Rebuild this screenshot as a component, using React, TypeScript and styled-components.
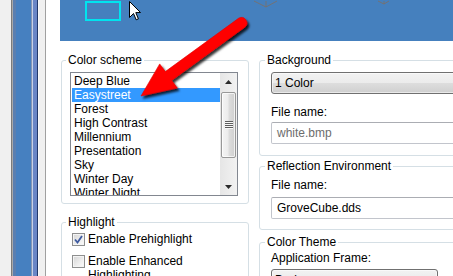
import React from "react";
import styled, { createGlobalStyle } from "styled-components";

const GlobalStyle = createGlobalStyle`
  html, body { margin: 0; padding: 0; overflow: hidden; background: #fff; }
  #root { width: 453px; height: 276px; }
`;

const Page = styled.div`
  position: relative;
  display: flex;
  width: 453px;
  height: 276px;
  overflow: hidden;
  background: #fff;
  font-family: "Liberation Sans", Arial, sans-serif;
  font-size: 12px;
  line-height: 14px;
  color: #000;
`;

const Strip = styled.div`
  display: flex;
  flex: none;
  height: 100%;
`;

const Stripe = styled.div<{ $w: number; $bg: string }>`
  flex: none;
  width: ${(p) => p.$w}px;
  background: ${(p) => p.$bg};
`;

const Main = styled.div`
  display: flex;
  flex-direction: column;
  flex: none;
  width: 407px;
  padding-left: 14px;
  box-sizing: border-box;
`;

const Banner = styled.div`
  display: flex;
  align-items: flex-start;
  height: 41px;
  flex: none;
  background: #4580be;
  padding: 1px 0 0 25px;
  box-sizing: border-box;
  overflow: hidden;
`;

const SelectionBox = styled.div`
  width: 36px;
  height: 20px;
  border: 2px solid #00e4ef;
  box-sizing: border-box;
  flex: none;
`;

const CursorIcon = styled.svg`
  flex: none;
  margin-left: 8px;
`;

const ModelLines = styled.svg<{ $ml: number }>`
  flex: none;
  margin-top: -1px;
  margin-left: ${(p) => p.$ml}px;
`;

const Content = styled.div`
  display: flex;
  align-items: flex-start;
  gap: 10px;
  padding-left: 1px;
`;

const Column = styled.div<{ $w: number }>`
  display: flex;
  flex-direction: column;
  flex: none;
  width: ${(p) => p.$w}px;
`;

const Group = styled.fieldset<{ $mt: number; $pad: string }>`
  margin: ${(p) => p.$mt}px 0 0 0;
  padding: ${(p) => p.$pad};
  border: 1px solid #d5dfe5;
  border-radius: 3px;
  min-width: 0;
  box-sizing: border-box;
  display: flex;
  flex-direction: column;
`;

const Legend = styled.legend<{ $ml: number }>`
  padding: 0 2px;
  margin-left: ${(p) => p.$ml}px;
  line-height: 14px;
  font-size: 12px;
  color: #000;
`;

const ListBox = styled.div`
  display: flex;
  width: 168px;
  height: 124px;
  border: 1px solid #828790;
  box-sizing: border-box;
  background: #fff;
  overflow: hidden;
`;

const ListItems = styled.div`
  display: flex;
  flex-direction: column;
  flex: 1;
  padding: 1px 0 0 1px;
`;

const ListItem = styled.div<{ $selected?: boolean }>`
  flex: none;
  height: 14px;
  line-height: 14px;
  padding-left: 2px;
  white-space: nowrap;
  background: ${(p) => (p.$selected ? "#3399ff" : "transparent")};
  color: ${(p) => (p.$selected ? "#fff" : "#000")};
`;

const ScrollBar = styled.div`
  display: flex;
  flex-direction: column;
  flex: none;
  width: 17px;
  background: linear-gradient(to right, #e6e6e6, #f2f2f2);
`;

const ScrollButton = styled.div`
  display: flex;
  align-items: center;
  justify-content: center;
  height: 17px;
  flex: none;
`;

const Thumb = styled.div`
  display: flex;
  align-items: center;
  justify-content: center;
  flex: none;
  height: 66px;
  margin: 2px 1px 0 1px;
  border: 1px solid #989898;
  border-radius: 2px;
  box-sizing: border-box;
  background: linear-gradient(to right, #f4f4f4 0%, #ececec 45%, #dcdcdc 55%, #cfcfcf 100%);
  box-shadow: inset 0 0 0 1px rgba(255, 255, 255, 0.7);
`;

const TrackSpace = styled.div`
  flex: 1;
`;

const CheckRow = styled.div<{ $mt: number }>`
  display: flex;
  align-items: flex-start;
  gap: 3px;
  margin: ${(p) => p.$mt}px 0 0 2px;
`;

const CheckBox = styled.span`
  display: flex;
  align-items: center;
  justify-content: center;
  flex: none;
  width: 13px;
  height: 13px;
  margin-top: 1px;
  border: 1px solid #8e8f8f;
  box-sizing: border-box;
  background: linear-gradient(135deg, #d4d4d4 0%, #eeeeee 60%, #fbfbfb 100%);
  box-shadow: inset 0 0 0 1px #f4f4f4;
`;

const CheckText = styled.span`
  line-height: 14px;
`;

const FieldLabel = styled.div<{ $mt: number }>`
  line-height: 14px;
  margin-top: ${(p) => p.$mt}px;
  white-space: nowrap;
`;

const Combo = styled.div<{ $mt: number; $w?: number }>`
  flex: none;
  height: 22px;
  width: ${(p) => (p.$w ? `${p.$w}px` : "auto")};
  margin-top: ${(p) => p.$mt}px;
  padding-left: 3px;
  line-height: 20px;
  border: 1px solid #707070;
  border-radius: 3px;
  box-sizing: border-box;
  background: linear-gradient(#f2f2f2 0%, #ebebeb 50%, #dddddd 51%, #cfcfcf 100%);
  box-shadow: inset 0 0 0 1px rgba(255, 255, 255, 0.55);
  white-space: nowrap;
`;

const TextBox = styled.div<{ $mt: number; $dim?: boolean }>`
  flex: none;
  height: 22px;
  margin-top: ${(p) => p.$mt}px;
  padding-left: 5px;
  line-height: 20px;
  border: 1px solid #c2c5cc;
  border-top-color: #abadb3;
  border-radius: 2px;
  box-sizing: border-box;
  background: #fff;
  color: ${(p) => (p.$dim ? "#6d6d6d" : "#000")};
  white-space: nowrap;
`;

const Overlay = styled.svg`
  position: absolute;
  left: 0;
  top: 0;
  pointer-events: none;
`;

const stripes: Array<[number, string]> = [
  [11, "#f0f0f0"],
  [1, "#7b7b7b"],
  [1, "#a9a9a9"],
  [3, "#5a7fb0"],
  [15, "#4680c0"],
  [1, "#8595b5"],
  [1, "#c8d2e6"],
  [4, "#6a86c6"],
  [1, "#22386a"],
  [1, "#f8f8f8"],
  [6, "#f0f0f0"],
  [1, "#a0a0a0"],
];

const schemes = [
  "Deep Blue",
  "Easystreet",
  "Forest",
  "High Contrast",
  "Millennium",
  "Presentation",
  "Sky",
  "Winter Day",
  "Winter Night",
];

const Arrow = () => (
  <Overlay width="453" height="276" viewBox="0 0 453 276">
    <defs>
      <filter id="sh" x="-20%" y="-20%" width="140%" height="140%">
        <feDropShadow dx="2" dy="2.5" stdDeviation="1.3" floodColor="#000" floodOpacity="0.8" />
      </filter>
    </defs>
    <path
      filter="url(#sh)"
      fill="#ff0000"
      stroke="#e00000"
      strokeWidth="0.6"
      d="M141 96 L159.7 63.9 L165.3 71.6 L238.8 18.1 A5.5 5.5 0 0 1 245.2 26.9 L171.7 80.4 L177.3 88.1 Z"
    />
  </Overlay>
);

export default function App() {
  return (
    <>
      <GlobalStyle />
      <Page>
        <Strip>
          {stripes.map(([w, bg], i) => (
            <Stripe key={i} $w={w} $bg={bg} />
          ))}
        </Strip>
        <Main>
          <Banner>
            <SelectionBox />
            <CursorIcon width="12" height="20" viewBox="0 0 12 20">
              <path
                d="M0.5 0.5 L0.5 16.5 L4.5 12.5 L7.2 18.8 L9.4 17.9 L6.8 11.6 L11.5 11.5 Z"
                fill="#fff"
                stroke="#000"
                strokeWidth="1"
                strokeLinejoin="miter"
              />
            </CursorIcon>
            <ModelLines $ml={113} width="24" height="8" viewBox="0 0 24 8">
              <path d="M0 1 L12 7 L23 1 M12 1 L12 7" stroke="#7d6f63" strokeWidth="0.8" fill="none" />
            </ModelLines>
            <ModelLines $ml={100} width="12" height="5" viewBox="0 0 12 5">
              <path d="M0 1 L6 4 L11 1 M6 1 L6 4" stroke="#7d6f63" strokeWidth="0.8" fill="none" />
            </ModelLines>
          </Banner>
          <Content>
            <Column $w={188}>
              <Group $mt={12} $pad="5px 10px 7px 8px">
                <Legend $ml={-4}>Color scheme</Legend>
                <ListBox>
                  <ListItems>
                    {schemes.map((s) => (
                      <ListItem key={s} $selected={s === "Easystreet"}>
                        {s}
                      </ListItem>
                    ))}
                  </ListItems>
                  <ScrollBar>
                    <ScrollButton>
                      <svg width="7" height="4" viewBox="0 0 7 4">
                        <path d="M0 4 L3.5 0 L7 4 Z" fill="#2b2b2b" />
                      </svg>
                    </ScrollButton>
                    <Thumb>
                      <svg width="8" height="8" viewBox="0 0 8 8">
                        <path d="M0 0.5 H8 M0 2.5 H8 M0 4.5 H8 M0 6.5 H8" stroke="#5e5e5e" strokeWidth="1" />
                        <path d="M0 1.5 H8 M0 3.5 H8 M0 5.5 H8 M0 7.5 H8" stroke="#f8f8f8" strokeWidth="1" />
                      </svg>
                    </Thumb>
                    <TrackSpace />
                    <ScrollButton>
                      <svg width="7" height="4" viewBox="0 0 7 4">
                        <path d="M0 0 L3.5 4 L7 0 Z" fill="#2b2b2b" />
                      </svg>
                    </ScrollButton>
                  </ScrollBar>
                </ListBox>
              </Group>
              <Group $mt={11} $pad="3px 10px 7px 8px">
                <Legend $ml={-4}>Highlight</Legend>
                <CheckRow $mt={0}>
                  <CheckBox>
                    <svg width="9" height="9" viewBox="0 0 9 9">
                      <path d="M1 4.5 L3.5 7.5 L8 1" stroke="#3d5aa0" strokeWidth="1.8" fill="none" />
                    </svg>
                  </CheckBox>
                  <CheckText>Enable Prehighlight</CheckText>
                </CheckRow>
                <CheckRow $mt={8}>
                  <CheckBox />
                  <CheckText>Enable Enhanced Highlighting</CheckText>
                </CheckRow>
              </Group>
            </Column>
            <Column $w={230}>
              <Group $mt={12} $pad="5px 11px 11px 11px">
                <Legend $ml={-6}>Background</Legend>
                <Combo $mt={0}>1 Color</Combo>
                <FieldLabel $mt={11}>File name:</FieldLabel>
                <TextBox $mt={3} $dim>
                  white.bmp
                </TextBox>
              </Group>
              <Group $mt={3} $pad="5px 11px 10px 11px">
                <Legend $ml={-6}>Reflection Environment</Legend>
                <FieldLabel $mt={0}>File name:</FieldLabel>
                <TextBox $mt={5}>GroveCube.dds</TextBox>
              </Group>
              <Group $mt={5} $pad="2px 11px 10px 11px">
                <Legend $ml={-6}>Color Theme</Legend>
                <FieldLabel $mt={0}>Application Frame:</FieldLabel>
                <Combo $mt={4} $w={167}>
                  Dark
                </Combo>
              </Group>
            </Column>
          </Content>
        </Main>
        <Arrow />
      </Page>
    </>
  );
}
